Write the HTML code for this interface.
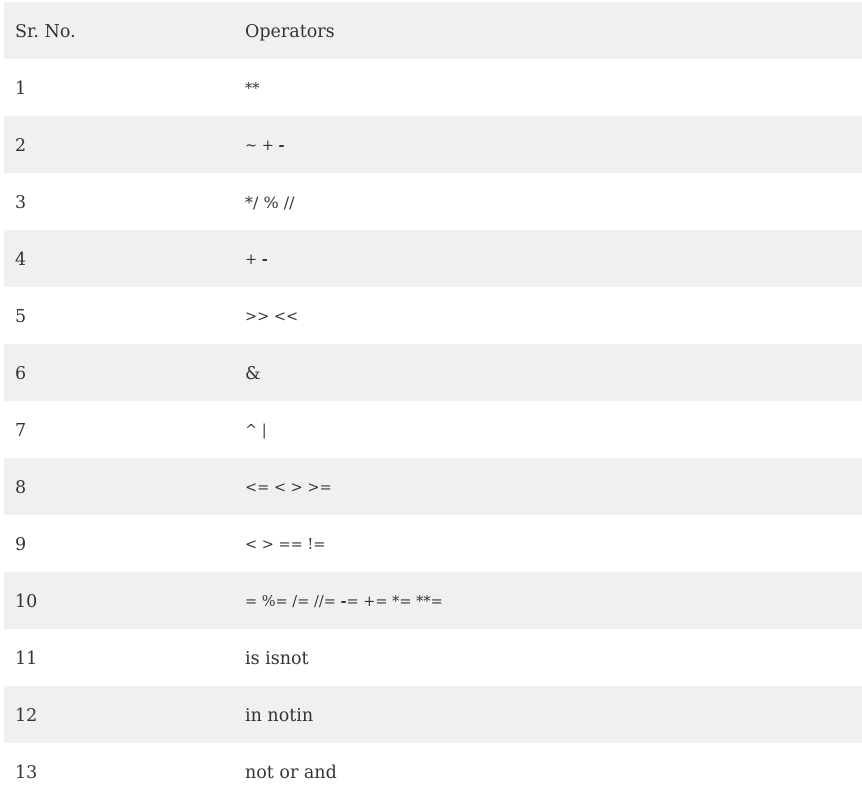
<!DOCTYPE html>
<html><head><style>
html,body{margin:0;padding:0;background:#fff;width:862px;height:783px;overflow:hidden}
.t{position:absolute;left:4px;top:2px;width:858px}
.r{height:57px;line-height:60px;font-family:"DejaVu Serif",serif;font-size:17.5px;color:#333;position:relative}
.r:nth-child(odd){background:#f0f0f0}
.a{position:absolute;left:11px}
.b{position:absolute;left:241px}
.s{font-size:14.5px}
.m{font-size:16px}
</style></head><body>
<div class="t">
<div class="r"><span class="a">Sr. No.</span><span class="b">Operators</span></div>
<div class="r"><span class="a">1</span><span class="b s">**</span></div>
<div class="r"><span class="a">2</span><span class="b s">~ + <b>-</b></span></div>
<div class="r"><span class="a">3</span><span class="b m">*/ % //</span></div>
<div class="r"><span class="a">4</span><span class="b s">+ <b>-</b></span></div>
<div class="r"><span class="a">5</span><span class="b s">&gt;&gt; &lt;&lt;</span></div>
<div class="r"><span class="a">6</span><span class="b">&amp;</span></div>
<div class="r"><span class="a">7</span><span class="b s">^ |</span></div>
<div class="r"><span class="a">8</span><span class="b s">&lt;= &lt; &gt; &gt;=</span></div>
<div class="r"><span class="a">9</span><span class="b s">&lt; &gt; == !=</span></div>
<div class="r"><span class="a">10</span><span class="b s">= %= /= //= <b>-</b>= += *= **=</span></div>
<div class="r"><span class="a">11</span><span class="b">is isnot</span></div>
<div class="r"><span class="a">12</span><span class="b">in notin</span></div>
<div class="r"><span class="a">13</span><span class="b">not or and</span></div>
</div>
</body></html>
